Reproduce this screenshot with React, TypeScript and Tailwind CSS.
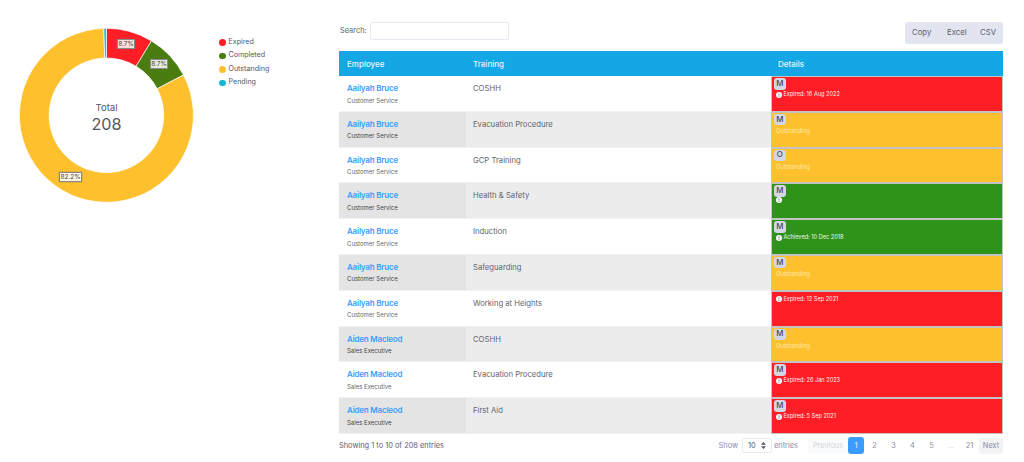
const CX = 106.4;
const CY = 115.3;

function arcPath(start: number, end: number, r1 = 87, r0 = 57.3) {
  const pt = (r: number, a: number) => {
    const rad = ((a - 90) * Math.PI) / 180;
    return `${(CX + r * Math.cos(rad)).toFixed(2)} ${(CY + r * Math.sin(rad)).toFixed(2)}`;
  };
  const large = end - start > 180 ? 1 : 0;
  return `M ${pt(r1, start)} A ${r1} ${r1} 0 ${large} 1 ${pt(r1, end)} L ${pt(r0, end)} A ${r0} ${r0} 0 ${large} 0 ${pt(r0, start)} Z`;
}

const segments = [
  { color: "#ff1e26", start: 0, end: 31.2 },
  { color: "#4a7c10", start: 31.2, end: 62.4 },
  { color: "#ffc02e", start: 62.4, end: 358.3 },
  { color: "#17b7d3", start: 358.3, end: 360 },
];

const legend = [
  { label: "Expired", dot: "bg-[#ff1e26]" },
  { label: "Completed", dot: "bg-[#4a7c10]" },
  { label: "Outstanding", dot: "bg-[#ffc02e]" },
  { label: "Pending", dot: "bg-[#17b7d3]" },
];

type Row = {
  name: string;
  role: string;
  training: string;
  tone: "red" | "amber" | "green";
  badge?: string;
  status: string;
  icon: boolean;
};

const rows: Row[] = [
  { name: "Aailyah Bruce", role: "Customer Service", training: "COSHH", tone: "red", badge: "M", status: "Expired: 16 Aug 2022", icon: true },
  { name: "Aailyah Bruce", role: "Customer Service", training: "Evacuation Procedure", tone: "amber", badge: "M", status: "Outstanding", icon: false },
  { name: "Aailyah Bruce", role: "Customer Service", training: "GCP Training", tone: "amber", badge: "O", status: "Outstanding", icon: false },
  { name: "Aailyah Bruce", role: "Customer Service", training: "Health & Safety", tone: "green", badge: "M", status: "", icon: true },
  { name: "Aailyah Bruce", role: "Customer Service", training: "Induction", tone: "green", badge: "M", status: "Achieved: 10 Dec 2018", icon: true },
  { name: "Aailyah Bruce", role: "Customer Service", training: "Safeguarding", tone: "amber", badge: "M", status: "Outstanding", icon: false },
  { name: "Aailyah Bruce", role: "Customer Service", training: "Working at Heights", tone: "red", status: "Expired: 12 Sep 2021", icon: true },
  { name: "Aiden Macleod", role: "Sales Executive", training: "COSHH", tone: "amber", badge: "M", status: "Outstanding", icon: false },
  { name: "Aiden Macleod", role: "Sales Executive", training: "Evacuation Procedure", tone: "red", badge: "M", status: "Expired: 26 Jan 2023", icon: true },
  { name: "Aiden Macleod", role: "Sales Executive", training: "First Aid", tone: "red", badge: "M", status: "Expired: 5 Sep 2021", icon: true },
];

const toneClass = {
  red: "bg-[#ff1e26] text-[#fdeeee] text-[5.6px]",
  amber: "bg-[#ffc02e] text-[#ffe9a8] text-[5.9px]",
  green: "bg-[#2e9318] text-[#eef8ec] text-[5.6px]",
};

function InfoDot() {
  return (
    <svg width="6" height="6" viewBox="0 0 12 12" className="shrink-0">
      <circle cx="6" cy="6" r="6" fill="#fff" />
      <rect x="5" y="2.5" width="2" height="4.5" fill="#888" />
      <rect x="5" y="8" width="2" height="1.8" fill="#888" />
    </svg>
  );
}

function ChartLabel({ text, className }: { text: string; className: string }) {
  return (
    <div
      className={`absolute flex h-[10px] items-center justify-center border border-[#8a8a8a] bg-white/85 text-[6.4px] leading-none text-[#444] shadow-[0_0_1px_#666] ${className}`}
    >
      {text}
    </div>
  );
}

export default function App() {
  return (
    <div className="flex h-[462px] w-[1024px] overflow-hidden bg-white font-['Inter',sans-serif] text-[#62646e]">
      {/* Chart */}
      <div className="relative flex w-[339px] shrink-0 items-start">
        <svg width="214" height="230" className="shrink-0">
          {segments.map((s) => (
            <path key={s.color} d={arcPath(s.start, s.end)} fill={s.color} stroke="#fff" strokeWidth="0.7" />
          ))}
        </svg>
        <ChartLabel text="8.7%" className="left-[117px] top-[39px] w-[18px]" />
        <ChartLabel text="8.7%" className="left-[150px] top-[59px] w-[18px]" />
        <ChartLabel text="82.2%" className="left-[59px] top-[172px] w-[23px]" />
        <div className="absolute left-[56.5px] top-[101.5px] flex w-[100px] flex-col items-center text-[#55575f]">
          <span className="text-[9.6px] leading-[12px]">Total</span>
          <span className="text-[16.2px] leading-[20px]">208</span>
        </div>
        <div className="ml-[5px] flex flex-col gap-[3px] pt-[37px]">
          {legend.map((l) => (
            <div key={l.label} className="flex h-[10.5px] items-center gap-[3px] text-[7.1px] text-[#55575f]">
              <span className="flex h-[6.5px] w-[6.5px] shrink-0">
                <span className={`h-full w-full rounded-full ${l.dot}`} />
              </span>
              {l.label}
            </div>
          ))}
        </div>
      </div>

      {/* Table */}
      <div className="flex w-[664px] shrink-0 flex-col pt-[22px]">
        <div className="flex h-[22px] items-start justify-between">
          <label className="flex items-center text-[7.4px] leading-[18px]">
            <span className="w-[31px] pl-px">Search:</span>
            <input className="h-[18px] w-[139px] rounded-[2px] border border-[#e8e9f2] bg-white" />
          </label>
          <div className="flex h-[22px] w-[98px] items-center rounded-[3px] bg-[#e2e4ef] pl-[7px] text-[7.8px] text-[#5d6072]">
            <span className="w-[35px]">Copy</span>
            <span className="w-[33px]">Excel</span>
            <span>CSV</span>
          </div>
        </div>

        <div className="mt-[7px] grid h-[25px] grid-cols-[127px_305px_232px] items-center bg-[#14a7e6] text-[8px] font-medium text-[#e8f6fd]">
          <span className="pl-[8px]">Employee</span>
          <span className="pl-[7px]">Training</span>
          <span className="pl-[7px]">Details</span>
        </div>

        {rows.map((row, i) => {
          const striped = i % 2 === 1;
          return (
            <div key={i} className="grid h-[35.8px] grid-cols-[127px_305px_232px]">
              <div className={`border-b border-[#f2f2f2] pl-[8px] pt-[7px] ${striped ? "bg-[#e4e4e4]" : "bg-white"}`}>
                <div className="text-[8px] font-semibold leading-[11px] tracking-[-0.2px] text-[#3b9dff]">{row.name}</div>
                <div className={`mt-[0.5px] text-[6px] leading-[11px] ${striped ? "text-[#444]" : "text-[#666]"}`}>{row.role}</div>
              </div>
              <div className={`border-b border-[#f2f2f2] pl-[7px] pt-[7px] text-[7.7px] leading-[11px] ${striped ? "bg-[#ececec]" : "bg-white"}`}>
                {row.training}
              </div>
              <div className={`border border-[#c4c4c4] ${toneClass[row.tone]} pl-[2px] pt-[1px]`}>
                {row.badge && (
                  <span className="flex h-[11.5px] w-[11.5px] items-center justify-center rounded-[3px] bg-[#d4d6e2] text-[7.8px] font-medium leading-none text-[#45485a]">
                    {row.badge}
                  </span>
                )}
                <div className={`ml-[2px] flex items-center gap-[1.5px] leading-[9px] ${row.badge ? "mt-[0.5px]" : "mt-[2px]"}`}>
                  {row.icon && <InfoDot />}
                  <span>{row.status}</span>
                </div>
              </div>
            </div>
          );
        })}

        <div className="mt-[3px] flex h-[18px] items-center text-[7.4px]">
          <span className="text-[#5d6072]">Showing 1 to 10 of 208 entries</span>
          <div className="ml-auto flex items-center text-[#8a8da0]">
            <span>Show</span>
            <div className="ml-[4px] flex h-[15px] w-[30px] items-center justify-between rounded-[2px] border border-[#e8e9f2] bg-white px-[5px] text-[7.4px] text-[#55586a]">
              10
              <svg width="5" height="7" viewBox="0 0 5 7">
                <path d="M2.5 0 L5 2.7 H0 Z M2.5 7 L0 4.3 H5 Z" fill="#55586a" />
              </svg>
            </div>
            <span className="ml-[2px]">entries</span>
            <span className="ml-[10px] flex h-[16px] w-[40px] items-center justify-center rounded-[2px] bg-[#fafbfc] text-[#d4d6de]">Previous</span>
            <span className="mr-px flex h-[17px] w-[16px] items-center justify-center rounded-[3px] bg-[#3b9dff] text-[#e6f2ff]">1</span>
            <span className="w-[19px] text-center">2</span>
            <span className="w-[19px] text-center">3</span>
            <span className="w-[19px] text-center">4</span>
            <span className="w-[19px] text-center">5</span>
            <span className="w-[19px] text-center text-[#d4d6de]">…</span>
            <span className="w-[19px] text-center">21</span>
            <span className="flex h-[16px] w-[24px] items-center justify-center rounded-[2px] bg-[#f1f3f7]">Next</span>
          </div>
        </div>
      </div>
    </div>
  );
}
